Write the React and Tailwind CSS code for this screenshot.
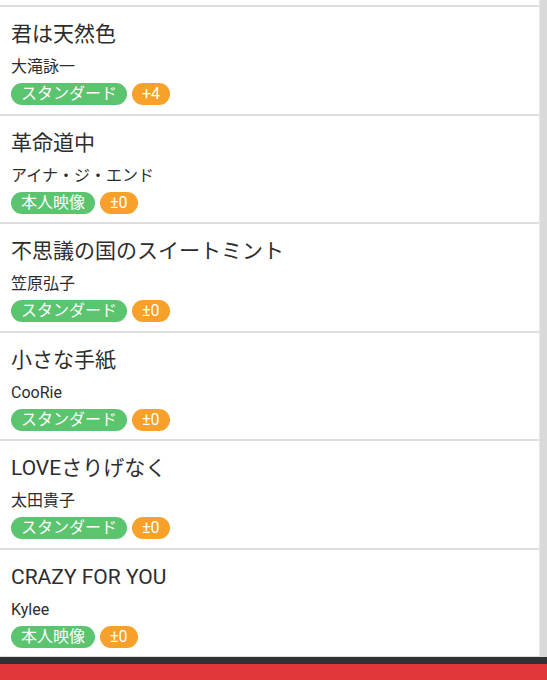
const songs = [
  { title: "君は天然色", artist: "大滝詠一", type: "スタンダード", key: "+4" },
  { title: "革命道中", artist: "アイナ・ジ・エンド", type: "本人映像", key: "±0" },
  { title: "不思議の国のスイートミント", artist: "笠原弘子", type: "スタンダード", key: "±0" },
  { title: "小さな手紙", artist: "CooRie", type: "スタンダード", key: "±0" },
  { title: "LOVEさりげなく", artist: "太田貴子", type: "スタンダード", key: "±0" },
  { title: "CRAZY FOR YOU", artist: "Kylee", type: "本人映像", key: "±0" },
];

function SongRow({ song }) {
  return (
    <li className="h-[108.5px] border-b-2 border-[#dedede] px-[11px] pt-[13px] flex flex-col">
      <h2 className="text-[21px] leading-[28px] text-[#2d2d2d]">{song.title}</h2>
      <p className="mt-[8px] text-[16px] leading-[22px] text-[#2d2d2d]">{song.artist}</p>
      <div className="mt-[5px] flex items-center gap-[5px]">
        <span className="h-[22px] rounded-full bg-[#5ac46f] px-[10px] text-[16px] leading-[22px] text-white">
          {song.type}
        </span>
        <span className="h-[22px] rounded-full bg-[#f7a12a] px-[10px] text-[16px] leading-[22px] text-white">
          {song.key}
        </span>
      </div>
    </li>
  );
}

export default function App() {
  return (
    <div
      className="h-[680px] w-[547px] overflow-hidden bg-white flex flex-col"
      style={{ fontFamily: '"Roboto", "Noto Sans CJK JP", sans-serif' }}
    >
      <div className="flex flex-1 min-h-0">
        <ul className="flex-1 min-w-0">
          <li className="h-[7px] border-b-2 border-[#dedede]" />
          {songs.map((s) => (
            <SongRow key={s.title} song={s} />
          ))}
        </ul>
        {/* scrollbar track */}
        <div className="w-[8px] bg-[#d9d9d9] border-l border-[#e6e6e6]" />
      </div>
      <div className="h-[7px] bg-[#2f3133]" />
      <div className="h-[16px] bg-[#e2363a]" />
    </div>
  );
}
